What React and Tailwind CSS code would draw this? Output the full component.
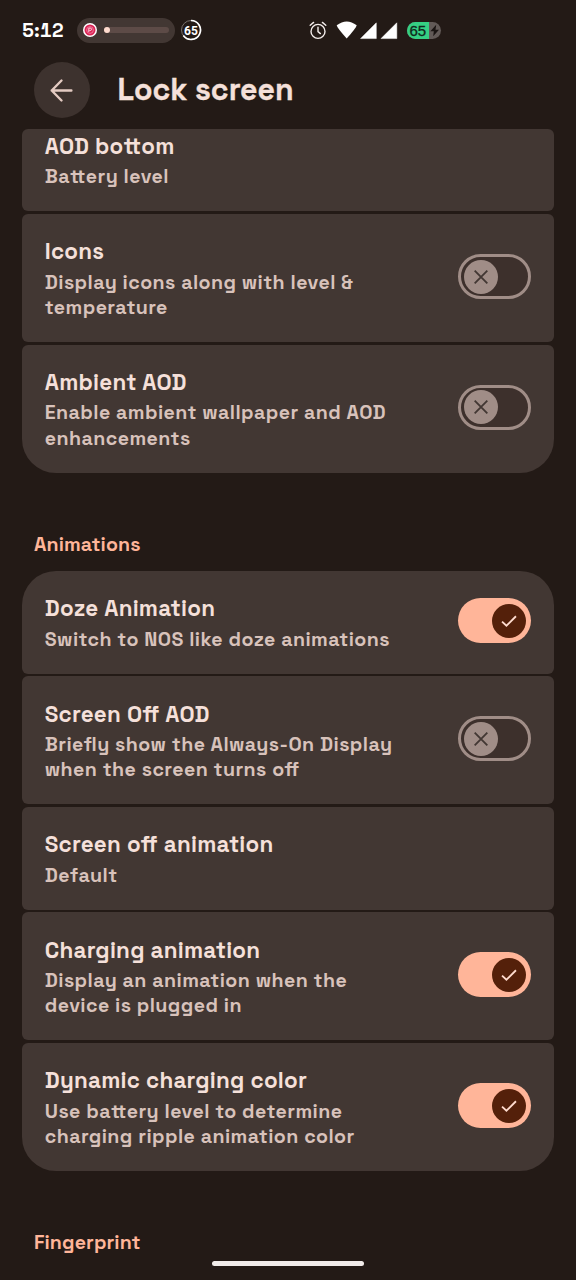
import React from "react";

const groups = [
  {
    id: "aod",
    items: [
      { title: "AOD bottom", lines: ["Battery level"] },
      { title: "Icons", lines: ["Display icons along with level &", "temperature"], on: false },
      { title: "Ambient AOD", lines: ["Enable ambient wallpaper and AOD", "enhancements"], on: false },
    ],
  },
  {
    id: "animations",
    items: [
      { title: "Doze Animation", lines: ["Switch to NOS like doze animations"], on: true },
      { title: "Screen Off AOD", lines: ["Briefly show the Always-On Display", "when the screen turns off"], on: false },
      { title: "Screen off animation", lines: ["Default"] },
      { title: "Charging animation", lines: ["Display an animation when the", "device is plugged in"], on: true },
      { title: "Dynamic charging color", lines: ["Use battery level to determine", "charging ripple animation color"], on: true },
    ],
  },
];

function Toggle({ on }) {
  return (
    <span
      role="switch"
      aria-checked={on}
      className={
        "mb-[3px] flex h-[45px] w-[73px] shrink-0 items-center rounded-full " +
        (on ? "justify-end bg-[#ffb599] pr-[5px]" : "justify-start border-[3px] border-[#a08d87] bg-[#3d302c] pl-[2.5px]")
      }
    >
      <span className={"flex h-[34px] w-[34px] items-center justify-center rounded-full " + (on ? "bg-[#54200a]" : "bg-[#a08d87]")}>
        <svg viewBox="0 0 24 24" className="h-[22px] w-[22px]" fill="none" strokeWidth="2">
          {on ? <path d="M4.4 12.6 9.2 17.2 19.6 6.8" stroke="#ffdbce" /> : <path d="M5.1 5.1 18.9 18.9M18.9 5.1 5.1 18.9" stroke="#423733" />}
        </svg>
      </span>
    </span>
  );
}

function Item({ item, first, last }) {
  const tall = item.lines.length > 1;
  return (
    <div
      className={
        "flex shrink-0 items-center justify-between bg-[#423733] pr-[22.5px] pl-[22.8px] " +
        (tall ? "h-[127.9px] " : "h-[102.6px] ") +
        (first ? "rounded-t-[34px] " : "rounded-t-[6px] ") +
        (last ? "rounded-b-[34px]" : "rounded-b-[6px]")
      }
    >
      <div className="h-full pt-[22.3px] whitespace-nowrap">
        <div className="text-[22.4px] leading-8 font-semibold tracking-[0.24px] text-[#f5e0da]">{item.title}</div>
        <div className="mt-[1.4px] text-[19.6px] leading-[25.2px] font-semibold tracking-[0.43px] text-[#d8c2bb]">
          {item.lines.map((text) => (
            <div key={text}>{text}</div>
          ))}
        </div>
      </div>
      {item.on !== undefined && <Toggle on={item.on} />}
    </div>
  );
}

function Group({ group }) {
  return (
    <section className="mr-[22.5px] ml-[22px] flex flex-col gap-[2.8px]">
      {group.items.map((item, i) => (
        <Item key={item.title} item={item} first={i === 0 && group.id !== "aod"} last={i === group.items.length - 1} />
      ))}
    </section>
  );
}

function StatusBar() {
  return (
    <div className="flex h-[60px] shrink-0 items-center text-white">
      <span className="ml-[22px] w-[55px] pt-[2px] text-[19.4px] font-bold tabular-nums">5:12</span>
      <div className="flex h-[25px] w-[98px] items-center rounded-full bg-[#423733] pl-[6px]">
        <svg viewBox="0 0 14 14" className="h-[14px] w-[14px]">
          <circle cx="7" cy="7" r="7" fill="#fff" />
          <circle cx="7" cy="7" r="5.5" fill="#dc2456" />
          <circle cx="7" cy="7" r="3.4" fill="none" stroke="#f49ab2" strokeWidth=".7" />
          <path d="M5.8 9V5.1h1.5a1.2 1.2 0 0 1 0 2.4H6.4" fill="none" stroke="#fff" strokeWidth=".8" />
        </svg>
        <div className="ml-[7px] flex h-[6px] w-[65px] items-center rounded-full bg-[#5d4b47]">
          <div className="h-[6px] w-[6px] rounded-full bg-[#ffdbce]" />
        </div>
      </div>
      <div className="relative ml-[5px] flex h-[22px] w-[22px] items-center justify-center">
        <svg viewBox="0 0 22 22" className="absolute inset-0 h-full w-full" fill="none">
          <circle cx="11" cy="11" r="9.5" stroke="#77706d" strokeWidth="1" />
          <path d="M11 1.5A9.5 9.5 0 1 1 3.3 16.6" stroke="#fff" strokeWidth="1.7" />
        </svg>
        <span className="pt-[2px] font-[Roboto,sans-serif] text-[12px] leading-none font-bold">65</span>
      </div>
      <svg viewBox="0 0 20 20" className="ml-[105.5px] h-[20px] w-[20px]" fill="none" stroke="#f4eeec" strokeWidth="1.4" strokeLinecap="round">
        <circle cx="10" cy="11.4" r="7" />
        <path d="M10 7.2v4.4l2.4 2M2.2 5.2 5.6 2.4M17.8 5.2 14.4 2.4" />
      </svg>
      <svg viewBox="0 0 64 20" className="ml-[8px] h-[20px] w-[64px]" fill="#fff">
        <path d="M.7 5.2Q10.7-2.4 20.7 5.2 20.1 8 10.7 18.5 1.3 8 .7 5.2Z" />
        <path d="M40.3 2.8V18.6H24.6Z M60.8 2.8V18.6H45Z" strokeLinejoin="round" stroke="#fff" strokeWidth=".5" />
      </svg>
      <div className="ml-[7.5px] flex h-[17px] w-[34px] overflow-hidden rounded-full bg-[#625a57]">
        <div className="flex w-[21.5px] items-center justify-center bg-[#35cf83] font-['Liberation_Sans',sans-serif] text-[15px] leading-none text-[#10281b] [-webkit-text-stroke:0.3px_#10281b]">65</div>
        <svg viewBox="0 0 12 17" className="h-[17px] w-[12px]" fill="#1b1513"><path d="M7.2 2.8 1.4 9.2H4.8L4.2 14.2 10 7.7H6.5Z" /></svg>
      </div>
    </div>
  );
}

function SectionTitle({ children }) {
  return (
    <h2 className="flex h-[98.3px] shrink-0 items-center pt-[46px] pl-[34px] text-[19.6px] font-semibold tracking-[0.1px] text-[#ffb599]">{children}</h2>
  );
}

export default function App() {
  return (
    <main className="relative flex h-[1280px] w-[576px] flex-col overflow-hidden bg-[#231a16] font-['Space_Grotesk',Inter,sans-serif] [font-feature-settings:'liga'_1]">
      <StatusBar />
      <header className="flex h-[69px] shrink-0 items-center pb-[9px] pl-[34px]">
        <button className="flex h-[56px] w-[56px] items-center justify-center rounded-full bg-[#3d322e]">
          <svg viewBox="0 0 24 24" className="mr-[2px] h-[25px] w-[25px]" fill="none" stroke="#e4cbc2" strokeWidth="2.3" strokeLinecap="round" strokeLinejoin="round">
            <path d="M21.5 12H2.6M12 2.4 2.6 12l9.4 9.6" />
          </svg>
        </button>
        <h1 className="ml-[27.5px] pt-[1px] text-[30.3px] leading-none font-semibold text-[#f5e0da] [-webkit-text-stroke:0.3px_#f5e0da]">Lock screen</h1>
      </header>
      <div className="flex min-h-0 flex-1 flex-col overflow-hidden">
        <div className="mr-[22.5px] ml-[22px] shrink-0 overflow-hidden rounded-t-[6px]">
          <div className="-mt-[20.3px] -mr-[22.5px] -ml-[22px]"><Group group={groups[0]} /></div>
        </div>
        <SectionTitle>Animations</SectionTitle>
        <Group group={groups[1]} />
        <SectionTitle>Fingerprint</SectionTitle>
      </div>
      <div className="absolute bottom-[14px] left-[212px] h-[5px] w-[152px] rounded-full bg-[#f1ebe9]" />
    </main>
  );
}
